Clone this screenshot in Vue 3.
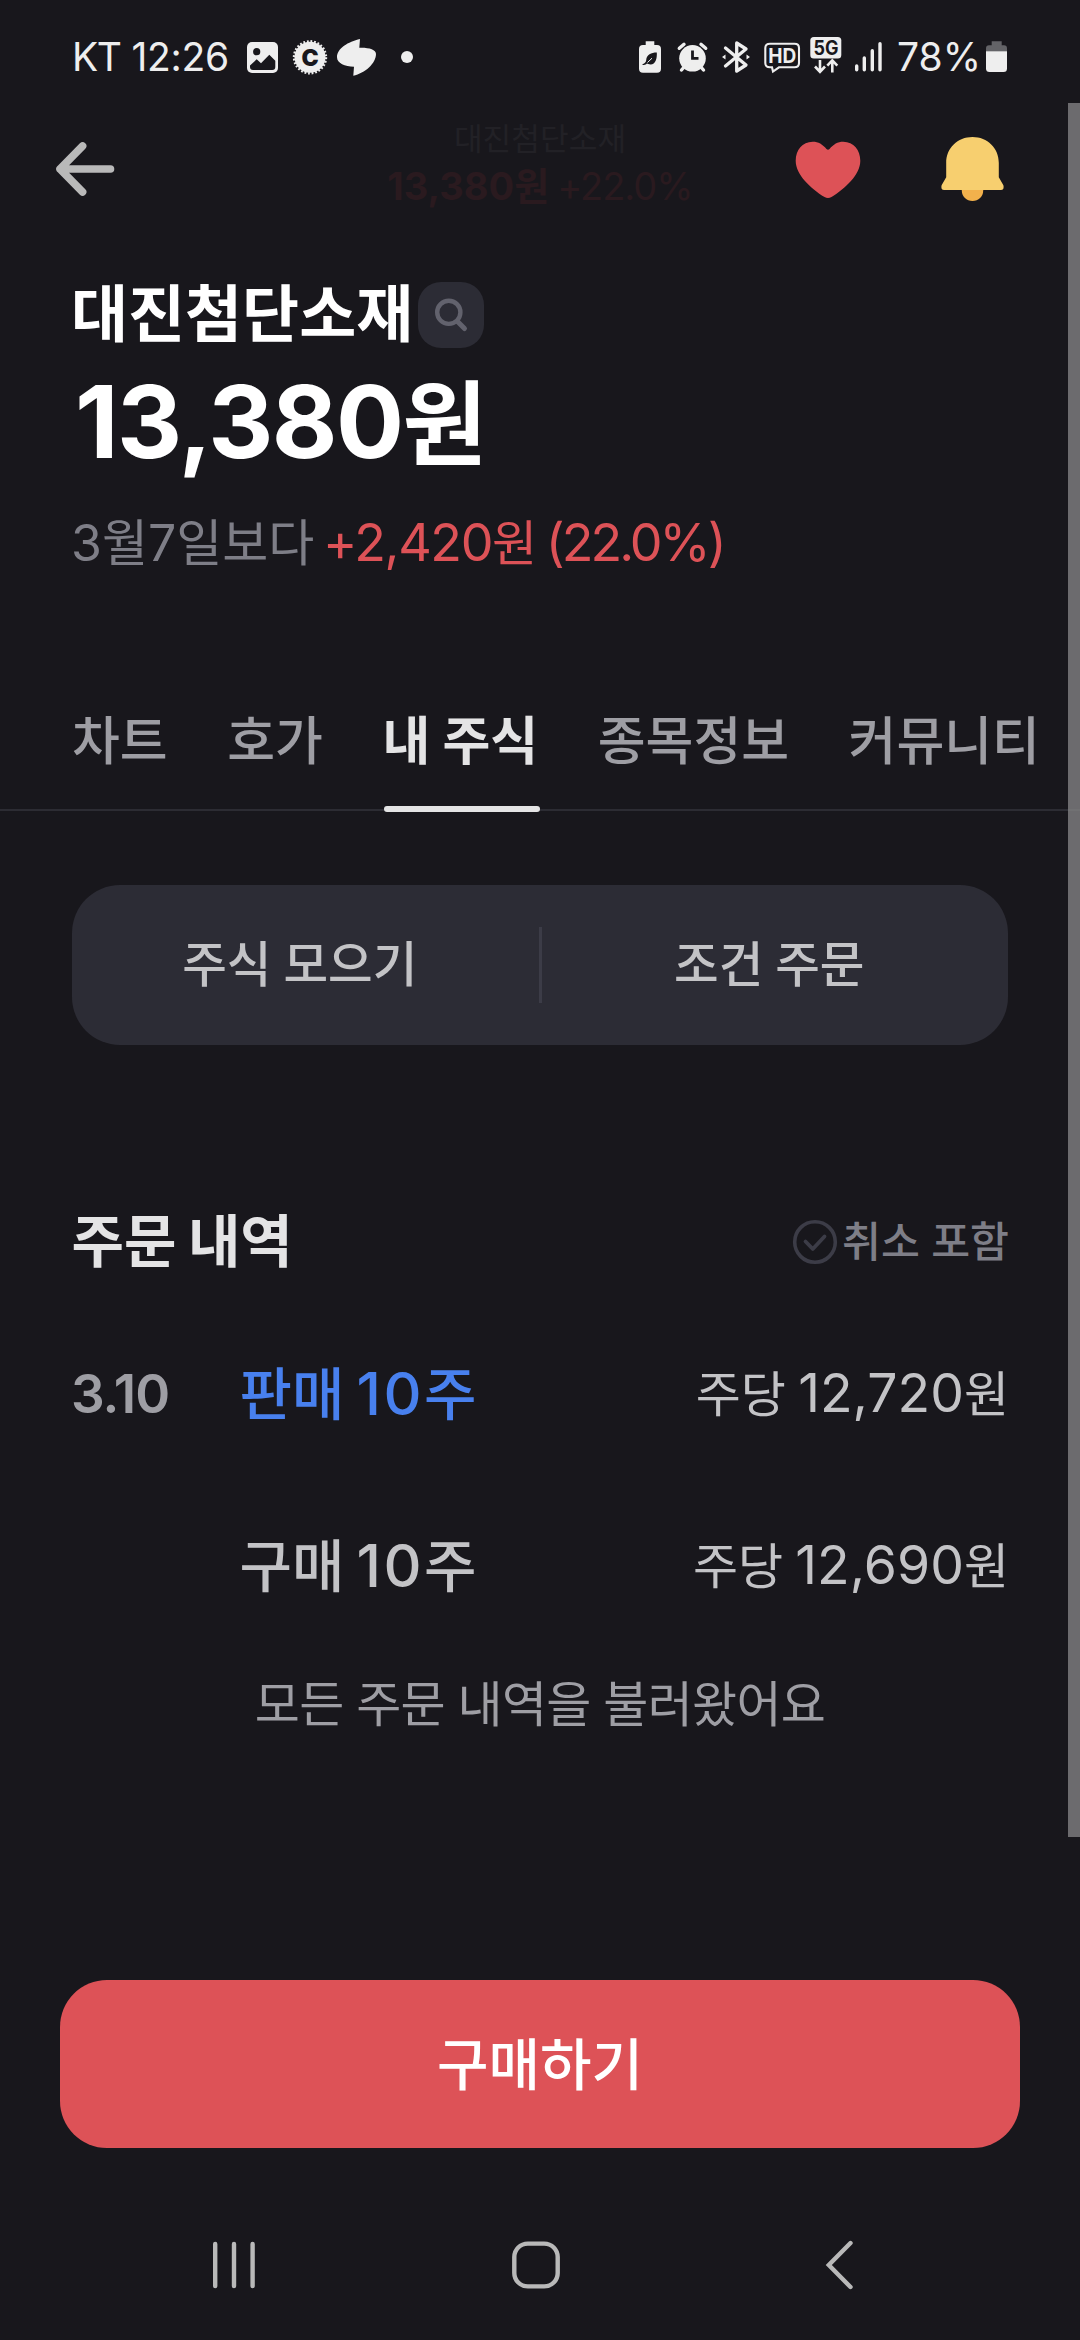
<script setup>
const tabs = ['차트', '호가', '내 주식', '종목정보', '커뮤니티']
const activeTab = '내 주식'
const orders = [
  { date: '3.10', label: '판매', count: '10', side: 'sell', price: '12,720' },
  { date: '', label: '구매', count: '10', side: 'buy', price: '12,690' },
]
</script>

<template>
  <div class="screen">
    <header class="status">
      <span class="carrier">KT</span>
      <span class="clock">12:26</span>
      <svg class="ico gallery" width="33" height="40" viewBox="0 0 33 40">
        <rect x="1" y="5" width="31" height="31" rx="5" fill="#eee" />
        <circle cx="10.7" cy="14.7" r="3.6" fill="#18171c" />
        <path d="M4 28.5L10.7 22.3L15 26.2L23.3 17.7L29.3 23.7V30Q29.3 33 26.3 33H7Q4 33 4 30Z" fill="#18171c" />
      </svg>
      <svg class="ico badge" width="36" height="40" viewBox="0 0 36 40">
        <circle cx="18" cy="20.3" r="15.5" fill="#eee" />
        <circle cx="18" cy="20.3" r="16" fill="none" stroke="#eee" stroke-width="2.4" stroke-dasharray="1.8 1.79" />
        <text x="18" y="28.8" text-anchor="middle" class="c-mark">C</text>
      </svg>
      <svg class="ico swirl" width="41" height="40" viewBox="0 0 41 40">
        <path d="M24 2C12.3 4.7 1 11.3 1 20.3C1 26.3 9 29.7 18 29.7L17.3 38.7C29 36.3 40 26.3 40 17C40 12.3 32.3 10.3 23.3 10.7Z" fill="#eee" />
      </svg>
      <span class="dot"></span>

      <svg class="ico saver" width="24" height="40" viewBox="0 0 24 40">
        <path d="M7.7 4.3H16.3V8H19Q23 8 23 12V31.7Q23 35.7 19 35.7H5Q1 35.7 1 31.7V12Q1 8 5 8H7.7Z" fill="#eee" />
        <path d="M4.5 27.2C7 26.5 8 25 8.2 23C8.8 17.5 13 15.6 18.8 15.5C19.2 22 17.5 27.5 12.5 27.4C10.8 27.4 9.6 26.5 9 26.4C7.8 27.6 6.4 28 4.5 28Z" fill="#18171c" />
        <path d="M9.5 25.5L14 21.2" stroke="#eee" stroke-width="1" />
      </svg>
      <svg class="ico alarm" width="33" height="40" viewBox="0 0 33 40">
        <circle cx="16.5" cy="21.3" r="13.3" fill="#eee" />
        <path d="M3.3 11.3L8 7.3M29.7 11.3L25 7.3M5.5 33L9 29M27.5 33L24 29" stroke="#eee" stroke-width="3.4" stroke-linecap="round" />
        <path d="M16.5 13.5V21.3H22.5" fill="none" stroke="#18171c" stroke-width="2.8" />
      </svg>
      <svg class="ico bt" width="30" height="40" viewBox="0 0 30 40">
        <path d="M4.5 11L25 28L15.7 34V6L25 12L4.5 29" fill="none" stroke="#eee" stroke-width="3.3" stroke-linejoin="round" stroke-linecap="round" />
        <path d="M1 20L4.5 17.5V22.5ZM29 20L25.5 17.5V22.5Z" fill="#eee" />
      </svg>
      <svg class="ico hd" width="38" height="40" viewBox="0 0 38 40">
        <path d="M7 6.7H31.5Q36 6.7 36 11V26Q36 30.3 31.5 30.3H16L10 34.6L9 30.3H7Q2.3 30.3 2.3 26V11Q2.3 6.7 7 6.7Z" fill="none" stroke="#eee" stroke-width="2.1" />
        <text x="19.2" y="26" text-anchor="middle" class="hd-mark" textLength="28" lengthAdjust="spacingAndGlyphs">HD</text>
      </svg>
      <svg class="ico fiveg" width="34" height="40" viewBox="0 0 34 40">
        <rect x="1.3" y="0" width="31" height="21.5" rx="3.5" fill="#eee" />
        <text x="17" y="17.7" text-anchor="middle" class="g-mark" textLength="25" lengthAdjust="spacingAndGlyphs">5G</text>
        <path d="M11 23V34.5M6 29.5L11 34.8L16 29.5M23.3 35.5V24M18.3 28.7L23.3 23.4L28.3 28.7" fill="none" stroke="#eee" stroke-width="2.6" />
      </svg>
      <svg class="ico signal" width="30" height="40" viewBox="0 0 30 40">
        <path d="M2.7 29V32.8M10.3 21V32.8M18.3 13.8V32.8M26 6.8V32.8" stroke="#eee" stroke-width="3.4" stroke-linecap="round" />
      </svg>
      <span class="percent">78%</span>
      <svg class="ico batt" width="24" height="40" viewBox="0 0 24 40">
        <path d="M6.7 4.2H16.7V8.3H19Q22 8.3 22 11.5V14.5H1V11.5Q1 8.3 4 8.3H6.7Z" fill="#636367" />
        <path d="M1 14.3H22V31.5Q22 35 18.5 35H4.5Q1 35 1 31.5Z" fill="#eee" />
      </svg>
    </header>

    <nav class="topbar">
      <svg class="back" width="64" height="58" viewBox="0 0 64 58">
        <path d="M28.6 6L6 29L28.6 52M6 29H56.5" fill="none" stroke="#b9b9b9" stroke-width="7.6" stroke-linecap="round" stroke-linejoin="round" />
      </svg>
      <div class="mini">
        <div class="mini-name">대진첨단소재</div>
        <div class="mini-price"><b>13,380원</b><span>+22.0%</span></div>
      </div>
      <svg class="heart" width="68" height="60" viewBox="0 0 68 60">
        <path d="M35.5 9Q34 10.5 32.5 9C28.5 4.2 24.5 1.7 18.7 1.7C8.3 1.7 1.7 10 1.7 20.7C1.7 35 17 48.5 30.5 57Q34 59 37.5 57C51 48.5 66.3 35 66.3 20.7C66.3 10 59.7 1.7 49.3 1.7C43.5 1.7 39.5 4.2 35.5 9Z" fill="#dd5257" />
      </svg>
      <svg class="bell" width="66" height="68" viewBox="0 0 66 68">
        <path d="M21.8 54H43.2V55.5C43.2 61.5 38.5 66 32.5 66S21.8 61.5 21.8 55.5Z" fill="#f2b14c" />
        <path d="M6.2 28C6.2 13 17.5 2 32.5 2S58.8 13 58.8 28V42.3L63.4 50.3Q64.6 55 60.8 55H4.2Q.4 55 1.6 50.3L6.2 42.3Z" fill="#f7cf6f" />
      </svg>
    </nav>

    <section class="summary">
      <div class="title-row">
        <h1>대진첨단소재</h1>
        <span class="pill">
          <svg width="66" height="66" viewBox="0 0 66 66">
            <circle cx="30.8" cy="30.3" r="11.6" fill="none" stroke="#62626d" stroke-width="4.4" />
            <path d="M39.5 39.5L46.5 46.5" stroke="#62626d" stroke-width="5" stroke-linecap="round" />
          </svg>
        </span>
      </div>
      <div class="price">13,380<span class="won">원</span></div>
      <div class="change">
        <span class="base">3월7일보다</span>
        <span class="diff">+2,420<span class="won">원</span><span class="rate">(22.0%)</span></span>
      </div>
    </section>

    <div class="tabs">
      <span v-for="t in tabs" :key="t" class="tab" :class="{ on: t === activeTab }">{{ t }}</span>
    </div>

    <div class="actions">
      <span class="action">주식 모으기</span>
      <i class="sep"></i>
      <span class="action">조건 주문</span>
    </div>

    <div class="section-head">
      <h2>주문 내역</h2>
      <div class="filter">
        <svg width="46" height="46" viewBox="0 0 46 46">
          <circle cx="23" cy="23" r="20.3" fill="none" stroke="#3c3c47" stroke-width="3.6" />
          <path d="M13.5 22.5L20.8 30L32.5 17.5" fill="none" stroke="#3c3c47" stroke-width="3.8" stroke-linecap="round" stroke-linejoin="round" />
        </svg>
        <span>취소 포함</span>
      </div>
    </div>

    <div class="orders">
      <div v-for="o in orders" :key="o.label" class="order">
        <span class="date">{{ o.date }}</span>
        <span class="kind" :class="o.side">{{ o.label }} <span class="count">{{ o.count }}</span>주</span>
        <span class="per">주당 <span class="num">{{ o.price }}</span>원</span>
      </div>
    </div>
    <p class="done">모든 주문 내역을 불러왔어요</p>

    <button class="buy-btn">구매하기</button>

    <footer class="sysnav">
      <svg class="recent" width="48" height="50" viewBox="0 0 48 50">
        <path d="M5.2 4V46M24 4V46M42.6 4V46" stroke="#b9b9b9" stroke-width="4.4" stroke-linecap="round" />
      </svg>
      <svg class="home" width="52" height="50" viewBox="0 0 52 50">
        <rect x="4.3" y="3.6" width="43.4" height="42.8" rx="13.5" fill="none" stroke="#b9b9b9" stroke-width="4.4" />
      </svg>
      <svg class="prev" width="32" height="52" viewBox="0 0 32 52">
        <path d="M26.5 4L4.8 26L26.5 48" fill="none" stroke="#b9b9b9" stroke-width="4.4" stroke-linecap="round" />
      </svg>
    </footer>

    <div class="scrollbar"></div>
  </div>
</template>

<style>
body {
  background: #18171c;
}
</style>

<style scoped>
.screen {
  position: relative;
  display: flex;
  flex-direction: column;
  width: 1080px;
  height: 2340px;
  overflow: hidden;
  background: #18171c;
  font-family: Inter, "Noto Sans CJK KR", sans-serif;
  white-space: nowrap;
}
svg {
  display: block;
  flex: none;
}
h1,
h2,
p {
  margin: 0;
}

/* status bar */
.status {
  display: flex;
  align-items: center;
  height: 114px;
  padding-left: 72px;
  color: #eee;
  font-size: 39px;
  font-weight: 400;
  line-height: 56px;
}
.carrier {
  width: 59.5px;
  letter-spacing: -1.5px;
}
.clock {
  width: 114.5px;
  letter-spacing: -0.3px;
}
.badge { margin-left: 13px; }
.swirl { margin-left: 8px; }
.dot {
  width: 12px;
  height: 12px;
  margin-left: 24px;
  border-radius: 50%;
  background: #eee;
}
.saver { margin-left: 225px; }
.alarm { margin-left: 14px; }
.bt { margin-left: 12px; }
.hd { margin-left: 12px; }
.fiveg { margin-left: 8px; }
.signal { margin-left: 11px; }
.percent {
  width: 88px;
  margin-left: 13px;
}
.c-mark,
.hd-mark,
.g-mark {
  font-family: Inter, sans-serif;
}
.c-mark {
  font-size: 23px;
  font-weight: 900;
  fill: #18171c;
}
.hd-mark {
  font-size: 20px;
  font-weight: 700;
  fill: #eee;
}
.g-mark {
  font-size: 19.5px;
  font-weight: 700;
  fill: #18171c;
}

/* top bar */
.topbar {
  display: flex;
  height: 110px;
  padding-left: 54px;
}
.back { margin-top: 26px; }
.mini {
  width: 320px;
  margin: 10px 94px 0 262px;
  text-align: center;
}
.mini-name {
  color: #222126;
  font-size: 31.2px;
  line-height: 30px;
}
.mini-price {
  margin-top: 17px;
  color: #2a1a1f;
  font-size: 38px;
  line-height: 30px;
}
.mini-price span {
  margin-left: 8px;
  letter-spacing: -1px;
}
.heart { margin-top: 26px; }
.bell {
  margin: 21px 0 0 77.5px;
}

/* stock summary */
.summary {
  padding: 58px 71px 0;
}
.title-row {
  display: flex;
  align-items: center;
  height: 66px;
}
h1 {
  width: 347px;
  color: #fff;
  font-size: 62px;
  font-weight: 700;
  line-height: 66px;
}
.pill {
  width: 66px;
  height: 66px;
  border-radius: 23px;
  background: #2c2c35;
}
.price {
  margin: 23px 0 0 4px;
  color: #fff;
  font-size: 101px;
  font-weight: 700;
  line-height: 100px;
  letter-spacing: -1.6px;
}
.price .won {
  font-size: 92px;
  line-height: 1;
}
.change {
  display: flex;
  margin-top: 42px;
  font-size: 50px;
  line-height: 60px;
}
.base {
  width: 252px;
  color: #7e7e87;
}
.diff {
  color: #dd5257;
  font-size: 52px;
  letter-spacing: -1.4px;
}
.diff .won {
  font-size: 49px;
  line-height: 1;
}
.rate {
  margin-left: 10px;
  letter-spacing: -3px;
}

/* tabs */
.tabs {
  display: flex;
  gap: 59.5px;
  margin-top: 102px;
  padding-left: 72px;
  border-bottom: 2px solid #2c2c33;
}
.tab {
  position: relative;
  color: #9e9ea4;
  font-size: 52px;
  font-weight: 500;
  line-height: 134px;
}
.tab.on {
  color: #e4e4e5;
  font-weight: 700;
}
.tab.on::after {
  content: "";
  position: absolute;
  left: 1.5px;
  right: -2px;
  bottom: -3px;
  height: 6px;
  border-radius: 3px;
  background: #e4e4e5;
}

/* shortcut card */
.actions {
  display: flex;
  align-items: center;
  height: 160px;
  margin: 74px 72px 0;
  border-radius: 48px;
  background: #2c2c35;
}
.action {
  flex: 1;
  padding-right: 11px;
  color: #c3c3c6;
  font-size: 48.5px;
  font-weight: 500;
  line-height: 60px;
  text-align: center;
  word-spacing: -1px;
}
.sep {
  width: 3px;
  height: 76px;
  background: #3c3c47;
}

/* order history */
.section-head {
  display: flex;
  align-items: center;
  justify-content: space-between;
  height: 60px;
  margin: 167px 71px 0 71.5px;
}
h2 {
  color: #e4e4e5;
  font-size: 57px;
  font-weight: 700;
  line-height: 60px;
  word-spacing: -2px;
}
.filter {
  display: flex;
  align-items: center;
  gap: 4px;
  color: #7e7e87;
  font-size: 42.3px;
  font-weight: 500;
  line-height: 60px;
}
.orders {
  margin: 36px 71px 0;
}
.order {
  display: flex;
  align-items: center;
  height: 172px;
  line-height: 60px;
}
.date {
  width: 168.5px;
  color: #9e9ea4;
  font-size: 53px;
  font-weight: 600;
  letter-spacing: -1px;
}
.kind {
  flex: 1;
  font-size: 57px;
  font-weight: 500;
  word-spacing: -3px;
}
.count {
  font-size: 59px;
  line-height: 1;
  letter-spacing: 2.4px;
}
.sell { color: #4880ee; }
.buy { color: #c3c3c6; }
.per {
  padding-top: 1px;
  color: #c3c3c6;
  font-size: 49px;
  word-spacing: -1.5px;
}
.num {
  font-size: 53.5px;
  line-height: 1;
}
.done {
  margin-top: 23px;
  color: #9e9ea4;
  font-size: 49px;
  line-height: 60px;
  letter-spacing: -0.7px;
  word-spacing: -0.5px;
  text-align: center;
}

/* bottom */
.buy-btn {
  height: 168px;
  margin: auto 60px 0;
  padding: 1px 0 0;
  border: 0;
  border-radius: 47px;
  background: #dd5257;
  color: #fff;
  font: 500 56px/60px Inter, "Noto Sans CJK KR", sans-serif;
}
.sysnav {
  display: flex;
  align-items: center;
  box-sizing: border-box;
  height: 192px;
  padding: 42px 0 0 210px;
}
.home { margin-left: 252px; }
.prev { margin-left: 262px; }

.scrollbar {
  position: absolute;
  top: 103px;
  right: 0;
  width: 12px;
  height: 1734px;
  background: rgba(136, 136, 138, 0.75);
}
</style>
